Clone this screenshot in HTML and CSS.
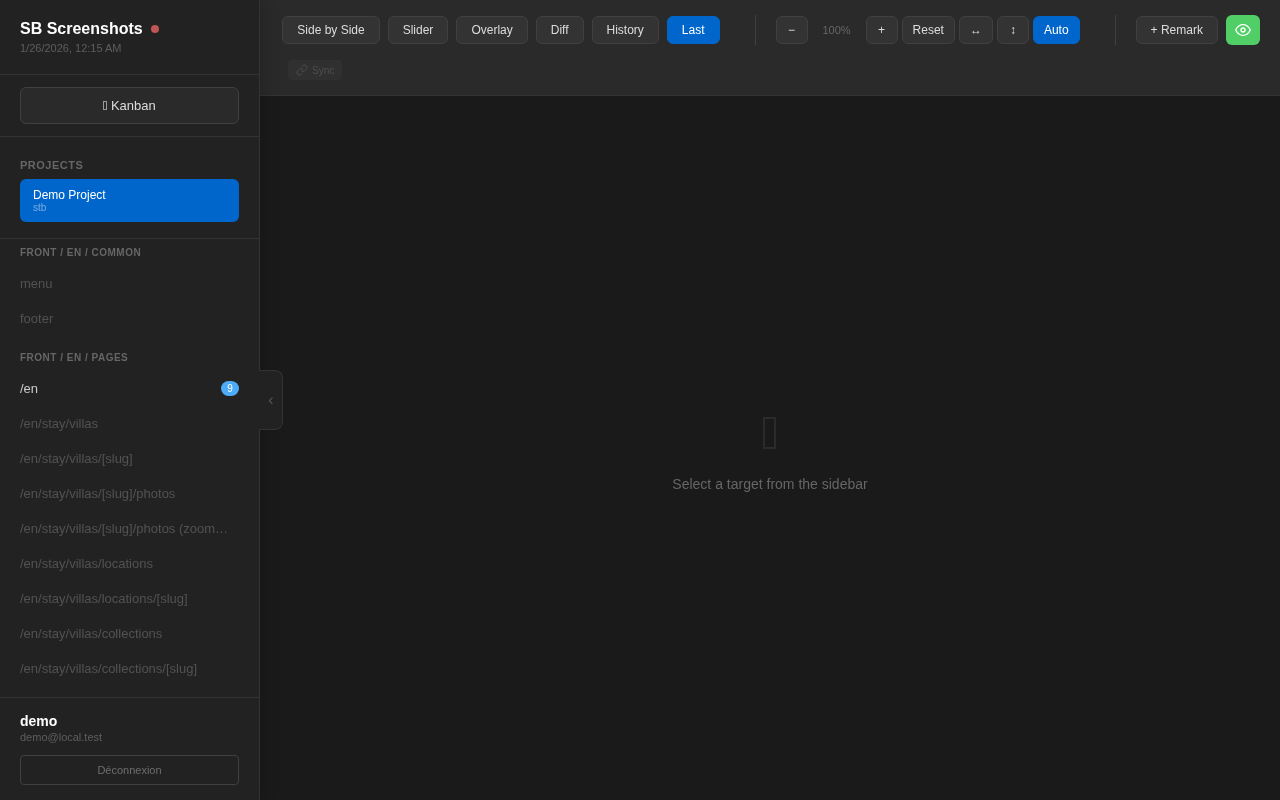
FILE: index.html
```html
<!DOCTYPE html>
<html lang="en">
<head>
<meta charset="utf-8">
<title>SB Screenshots</title>
<link rel="stylesheet" href="styles.css">
</head>
<body>
<div class="app">
  <aside class="sidebar">
    <header class="brand">
      <div class="brand-title"><h1>SB Screenshots</h1><span class="status-dot"></span></div>
      <div class="brand-date">1/26/2026, 12:15 AM</div>
    </header>
    <div class="kanban-wrap"><button class="kanban-btn"><span class="tofu"></span> Kanban</button></div>
    <section class="projects">
      <h2 class="projects-label">PROJECTS</h2>
      <div class="project-card">
        <div class="project-name">Demo Project</div>
        <div class="project-slug">stb</div>
      </div>
    </section>
    <nav class="tree">
      <h3 class="tree-label">FRONT / EN / COMMON</h3>
      <a class="tree-item">menu</a>
      <a class="tree-item">footer</a>
      <h3 class="tree-label tree-label-next">FRONT / EN / PAGES</h3>
      <a class="tree-item tree-item-on"><span class="tree-text">/en</span><span class="badge">9</span></a>
      <a class="tree-item">/en/stay/villas</a>
      <a class="tree-item">/en/stay/villas/[slug]</a>
      <a class="tree-item">/en/stay/villas/[slug]/photos</a>
      <a class="tree-item"><span class="tree-text">/en/stay/villas/[slug]/photos (zoomed)</span></a>
      <a class="tree-item">/en/stay/villas/locations</a>
      <a class="tree-item">/en/stay/villas/locations/[slug]</a>
      <a class="tree-item">/en/stay/villas/collections</a>
      <a class="tree-item">/en/stay/villas/collections/[slug]</a>
    </nav>
    <footer class="user">
      <div class="user-name">demo</div>
      <div class="user-mail">demo@local.test</div>
      <button class="logout">Déconnexion</button>
    </footer>
    <button class="collapse" aria-label="Collapse sidebar">‹</button>
  </aside>
  <main class="main">
    <div class="toolbar">
      <div class="tool-row">
        <div class="group group-modes">
          <button class="btn">Side by Side</button>
          <button class="btn">Slider</button>
          <button class="btn">Overlay</button>
          <button class="btn">Diff</button>
          <button class="btn">History</button>
          <button class="btn btn-on">Last</button>
        </div>
        <span class="sep"></span>
        <div class="group group-zoom">
          <button class="btn btn-sq">−</button>
          <span class="zoom-val">100%</span>
          <button class="btn btn-sq">+</button>
          <button class="btn btn-tight">Reset</button>
          <button class="btn btn-sq btn-wide">↔</button>
          <button class="btn btn-sq">↕</button>
          <button class="btn btn-on btn-tight">Auto</button>
        </div>
        <span class="sep"></span>
        <div class="group group-modes">
          <button class="btn">+ Remark</button>
          <button class="eye" aria-label="Toggle visibility">
            <svg width="16" height="16" viewBox="0 0 24 24" fill="none" stroke="currentColor" stroke-width="2" stroke-linecap="round" stroke-linejoin="round"><path d="M1 12s4-8 11-8 11 8 11 8-4 8-11 8-11-8-11-8z"/><circle cx="12" cy="12" r="3"/></svg>
          </button>
        </div>
      </div>
      <div class="tool-row-2">
        <button class="sync">
          <svg width="12" height="12" viewBox="0 0 24 24" fill="none" stroke="currentColor" stroke-width="2" stroke-linecap="round" stroke-linejoin="round"><path d="M10 13a5 5 0 0 0 7.54.54l3-3a5 5 0 0 0-7.07-7.07l-1.72 1.71"/><path d="M14 11a5 5 0 0 0-7.54-.54l-3 3a5 5 0 0 0 7.07 7.07l1.71-1.71"/></svg>
          <span>Sync</span>
        </button>
      </div>
    </div>
    <div class="empty">
      <div class="empty-icon"></div>
      <p class="empty-text">Select a target from the sidebar</p>
    </div>
  </main>
</div>
</body>
</html>
```

FILE: styles.css
```css
* { box-sizing: border-box; }
html, body { margin: 0; height: 100%; }
body {
  font-family: "Liberation Sans", Arial, sans-serif;
  background: #1a1a1a;
  color: #e0e0e0;
  overflow: hidden;
}
button { font-family: inherit; cursor: pointer; }
h1, h2, h3, p { margin: 0; }

.app { display: flex; height: 800px; will-change: transform; }

.sidebar {
  position: relative;
  z-index: 2;
  width: 260px;
  flex: none;
  display: flex;
  flex-direction: column;
  background: #222;
  border-right: 1px solid #333;
  box-shadow: 2px 0 16px rgba(0, 0, 0, .2);
}
.brand { height: 75px; padding: 20px 20px 0; border-bottom: 1px solid #333; }
.brand-title { display: flex; align-items: center; gap: 8px; height: 18px; }
.brand-title h1 { font-size: 16px; font-weight: 700; color: #fff; white-space: nowrap; }
.status-dot { width: 8px; height: 8px; border-radius: 50%; background: #bf5555; }
.brand-date { margin-top: 4px; font-size: 11px; line-height: 13px; color: #5e5e5e; }

.kanban-wrap { padding: 12px 20px; border-bottom: 1px solid #333; }
.kanban-btn {
  display: block;
  width: 100%;
  height: 37px;
  background: #2a2a2a;
  border: 1px solid #404040;
  border-radius: 6px;
  color: #dcdcdc;
  font-size: 13px;
}
.tofu {
  display: inline-block;
  width: 4px;
  height: 9px;
  border: 1px solid #999;
  vertical-align: 0;
}

.projects { padding: 22px 20px 16px; border-bottom: 1px solid #333; }
.projects-label { font-size: 11px; line-height: 13px; font-weight: 700; letter-spacing: .5px; color: #666; margin-bottom: 7px; }
.project-card { height: 43px; padding: 9px 13px 0; background: #06c; border-radius: 6px; }
.project-name { font-size: 12px; line-height: 14px; color: #fff; }
.project-slug { font-size: 10px; line-height: 11px; color: rgba(255,255,255,.45); }

.tree { flex: 1; min-height: 0; padding-top: 8px; overflow: hidden; }
.tree-label { font-size: 10px; line-height: 11px; font-weight: 700; letter-spacing: .5px; color: #666; padding: 0 20px; margin-bottom: 8px; }
.tree-label-next { margin-top: 16px; }
.tree-item {
  display: flex;
  align-items: center;
  justify-content: space-between;
  gap: 8px;
  height: 35px;
  padding: 0 20px;
  font-size: 13px;
  color: #525252;
  white-space: nowrap;
}
.tree-item-on { color: #ccc; }
.tree-text { overflow: hidden; text-overflow: ellipsis; padding-right: 6px; }
.badge {
  flex: none;
  min-width: 18px;
  height: 15px;
  border-radius: 8px;
  background: #4dabf7;
  color: #fff;
  font-size: 10px;
  line-height: 15px;
  text-align: center;
}

.user { height: 103px; padding: 15px 20px 0; border-top: 1px solid #333; }
.user-name { font-size: 14px; line-height: 16px; font-weight: 700; color: #fff; }
.user-mail { font-size: 11px; line-height: 13px; margin-top: 2px; color: #5e5e5e; }
.logout {
  display: block;
  width: 100%;
  height: 30px;
  margin-top: 11px;
  background: transparent;
  border: 1px solid #404040;
  border-radius: 4px;
  color: #6e6e6e;
  font-size: 11px;
}

.collapse {
  position: absolute;
  left: 259px;
  top: 370px;
  width: 24px;
  height: 60px;
  padding: 0 0 1px 1px;
  display: flex;
  align-items: center;
  justify-content: center;
  background: #222;
  border: 1px solid #333;
  border-left: 0;
  border-radius: 0 8px 8px 0;
  color: #555;
  font-size: 16px;
}

.main { flex: 1; min-width: 0; display: flex; flex-direction: column; }
.toolbar { height: 96px; padding: 15px 20px 0 22.3px; background: #2a2a2a; border-bottom: 1px solid #333; }
.tool-row { display: flex; align-items: center; height: 30px; }
.group { display: flex; flex: none; align-items: center; }
.group-modes { gap: 8px; }
.group-zoom { gap: 4px; }
.sep { flex: none; width: 1px; height: 30px; background: #404040; margin: 0 20px 0 35px; }

.btn {
  flex: none;
  height: 28px;
  padding: 0 14px;
  background: #333;
  border: 1px solid #404040;
  border-radius: 6px;
  color: #dcdcdc;
  font-size: 12px;
  white-space: nowrap;
}
.btn-on { background: #06c; border-color: #06c; color: #fff; }
.btn-tight { padding: 0 10px; }
.btn-sq { width: 32px; padding: 0; }
.btn-wide { width: 34px; }
.zoom-val { width: 50px; text-align: center; font-size: 11px; color: #666; }
.eye {
  display: flex;
  align-items: center;
  justify-content: center;
  width: 34px;
  height: 30px;
  padding: 0;
  background: #51cf66;
  border: 0;
  border-radius: 6px;
  color: #fff;
}
.tool-row-2 { padding: 15px 0 0 5.7px; }
.sync {
  display: flex;
  align-items: center;
  gap: 4px;
  width: 54px;
  height: 20px;
  padding: 0 0 0 8px;
  background: #303030;
  border: 0;
  border-radius: 4px;
  color: #4e4e4e;
  font-size: 10px;
}

.empty { flex: 1; display: flex; flex-direction: column; align-items: center; padding-top: 321px; }
.empty-icon { width: 13px; height: 32px; margin-right: 2px; border: 2px solid #2b2b2b; }
.empty-text { margin-top: 27px; font-size: 14px; line-height: 16px; color: #666; }
```
